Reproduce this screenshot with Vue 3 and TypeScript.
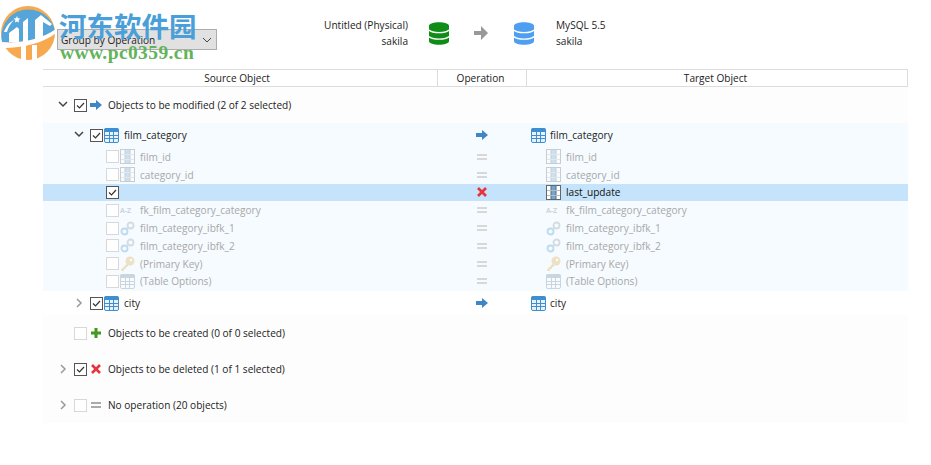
<template>
  <div class="page">
    <svg class="defs" width="0" height="0">
      <symbol id="table" viewBox="0 0 15 15">
        <rect x="0.5" y="0.5" width="14" height="14" rx="1.5" fill="#e8f2fb" stroke="#3f8fd0" />
        <rect x="0.5" y="0.5" width="14" height="3.5" fill="#3f8fd0" />
        <path d="M5.5 4v10M9.5 4v10M1 7.500h13M1 10.500h13" stroke="#3f8fd0" />
      </symbol>
      <symbol id="column" viewBox="0 0 15 15">
        <rect x="0.5" y="0.5" width="14" height="14" fill="#fff" stroke="#666" />
        <rect x="5" y="1" width="5" height="13" fill="#6aa8dc" />
        <path d="M5 1v13M10 1v13" stroke="#666" />
        <path d="M1 5.500h13M1 10.500h13" stroke="#bbb" />
      </symbol>
      <symbol id="link" viewBox="0 0 15 15">
        <circle cx="10.500" cy="4.500" r="3" fill="none" stroke="#8a97a3" stroke-width="1.800" />
        <circle cx="4.500" cy="10.500" r="3" fill="none" stroke="#3f8fd0" stroke-width="1.800" />
        <path d="M6 9l3-3" stroke="#8a97a3" stroke-width="1.600" />
      </symbol>
      <symbol id="key" viewBox="0 0 15 15">
        <circle cx="10" cy="5" r="4.500" fill="#dca53c" />
        <circle cx="11" cy="4" r="1.300" fill="#fff" />
        <path d="M7 7.500L1 13.500V15h3v-2h2v-2h1.500l1-2z" fill="#dca53c" />
      </symbol>
      <symbol id="options" viewBox="0 0 15 15">
        <rect x="0.5" y="0.5" width="14" height="14" rx="1.500" fill="#fff" stroke="#6b8299" />
        <rect x="0.5" y="0.5" width="14" height="3.500" fill="#6b8299" />
        <path d="M5.500 4v10M9.500 4v10M1 7.500h13M1 10.500h13" stroke="#6b8299" />
      </symbol>
      <symbol id="right" viewBox="0 0 12 10">
        <path d="M0 3h6V0l6 5-6 5V7H0z" fill="#3f86c6" />
      </symbol>
      <symbol id="equal" viewBox="0 0 10 6">
        <path d="M0 1h10M0 5h10" stroke="currentColor" stroke-width="2" />
      </symbol>
      <symbol id="cross" viewBox="0 0 10 10">
        <path d="M1 1l8 8M9 1l-8 8" stroke="#e5343c" stroke-width="2.600" />
      </symbol>
      <symbol id="plus" viewBox="0 0 10 10">
        <path d="M5 0v10M0 5h10" stroke="#3f9a1e" stroke-width="3" />
      </symbol>
      <symbol id="db" viewBox="0 0 20 23">
        <path d="M0 4c0-5 20-5 20 0v15c0 5-20 5-20 0z" fill="currentColor" />
        <path d="M0 8c3 3.500 17 3.500 20 0M0 14.500c3 3.500 17 3.500 20 0" fill="none" stroke="#fff" stroke-width="1.400" />
      </symbol>
    </svg>

    <header class="top">
      <div class="combo">
        <span>Group by Operation</span>
        <svg class="combo-arrow" viewBox="0 0 10 6"><path d="M1 1l4 4 4-4" fill="none" stroke="#444" /></svg>
      </div>
      <div class="endpoints">
        <div class="endpoint endpoint-left">
          <span>Untitled (Physical)</span>
          <span>sakila</span>
        </div>
        <svg class="db db-green"><use href="#db" /></svg>
        <svg class="flow-arrow" viewBox="0 0 14 14"><path d="M0 5h7V0l7 7-7 7V9H0z" fill="#999" /></svg>
        <svg class="db db-blue"><use href="#db" /></svg>
        <div class="endpoint endpoint-right">
          <span>MySQL 5.5</span>
          <span>sakila</span>
        </div>
      </div>
    </header>

    <div class="head">
      <div class="head-source">Source Object</div>
      <div>Operation</div>
      <div>Target Object</div>
    </div>

    <div class="body">
      <div class="section">
        <div class="src">
          <svg class="chevron"><path d="M1 2l4 4 4-4" /></svg>
          <span class="box checked"><svg viewBox="0 0 11 11"><path d="M2 5.500l2.500 2.500 4.500-5" /></svg></span>
          <svg class="op-icon"><use href="#right" /></svg>
          <span>Objects to be modified (2 of 2 selected)</span>
        </div>
      </div>

      <div class="group">
        <div class="table-row">
          <div class="src">
            <svg class="chevron"><path d="M1 2l4 4 4-4" /></svg>
            <span class="box checked"><svg viewBox="0 0 11 11"><path d="M2 5.500l2.500 2.500 4.500-5" /></svg></span>
            <svg class="obj-icon"><use href="#table" /></svg>
            <span>film_category</span>
          </div>
          <div class="op"><svg class="op-icon"><use href="#right" /></svg></div>
          <div class="dst">
            <svg class="obj-icon"><use href="#table" /></svg>
            <span>film_category</span>
          </div>
        </div>

        <div class="children">
          <div
            v-for="row in children"
            :key="row.target"
            class="child"
            :class="{ selected: row.selected }"
          >
            <div class="src">
              <span class="box" :class="{ checked: row.selected }">
                <svg v-if="row.selected" viewBox="0 0 11 11"><path d="M2 5.500l2.500 2.500 4.500-5" /></svg>
              </span>
              <template v-if="!row.selected">
                <span v-if="row.icon === 'az'" class="az">A-Z</span>
                <svg v-else class="obj-icon"><use :href="`#${row.icon}`" /></svg>
                <span>{{ row.target }}</span>
              </template>
            </div>
            <div class="op">
              <svg v-if="row.selected" class="cross"><use href="#cross" /></svg>
              <svg v-else class="equal"><use href="#equal" /></svg>
            </div>
            <div class="dst">
              <span v-if="row.icon === 'az'" class="az">A-Z</span>
              <svg v-else class="obj-icon"><use :href="`#${row.icon}`" /></svg>
              <span>{{ row.target }}</span>
            </div>
          </div>
        </div>
      </div>

      <div class="table-row city">
        <div class="src">
          <svg class="chevron closed"><path d="M3 1l4 4-4 4" /></svg>
          <span class="box checked"><svg viewBox="0 0 11 11"><path d="M2 5.500l2.500 2.500 4.500-5" /></svg></span>
          <svg class="obj-icon"><use href="#table" /></svg>
          <span>city</span>
        </div>
        <div class="op"><svg class="op-icon"><use href="#right" /></svg></div>
        <div class="dst">
          <svg class="obj-icon"><use href="#table" /></svg>
          <span>city</span>
        </div>
      </div>

      <div class="section">
        <div class="src">
          <span class="chevron-gap"></span>
          <span class="box"></span>
          <svg class="op-small"><use href="#plus" /></svg>
          <span>Objects to be created (0 of 0 selected)</span>
        </div>
      </div>
      <div class="section">
        <div class="src">
          <svg class="chevron closed"><path d="M3 1l4 4-4 4" /></svg>
          <span class="box checked"><svg viewBox="0 0 11 11"><path d="M2 5.500l2.500 2.500 4.500-5" /></svg></span>
          <svg class="op-small"><use href="#cross" /></svg>
          <span>Objects to be deleted (1 of 1 selected)</span>
        </div>
      </div>
      <div class="section">
        <div class="src">
          <svg class="chevron closed"><path d="M3 1l4 4-4 4" /></svg>
          <span class="box"></span>
          <svg class="op-small noop"><use href="#equal" /></svg>
          <span>No operation (20 objects)</span>
        </div>
      </div>
    </div>

    <!-- site watermark sits over the toolbar -->
    <div class="watermark">
      <svg class="wm-logo" viewBox="0 0 57 57">
        <circle cx="28" cy="27" r="27" fill="#f7a94f" />
        <path d="M2 36A27 27 0 1 1 55 25C42 33 20 38 2 36z" fill="#55a5da" />
        <path d="M1 36C20 38 42 33 56 23V27C44 37 22 42 4 42z" fill="#fff" />
        <path d="M9 36V27L17 21 19 23V37zM23 38V16L28 12V37zM35 35V14L41 9 52 18 50 20 43 16V33z" fill="#fff" />
        <path d="M21 40h5V54H21zM32 39h5V55H32z" fill="#fff" />
        <path d="M4 26C6 20 10 16 14 14 10 18 8 22 7 26z" fill="#fff" />
        <path d="M17 10l1 2.200 2.400.3-1.800 1.700.5 2.400-2.100-1.200-2.100 1.200.5-2.400-1.800-1.700 2.400-.3z" fill="#fff" />
      </svg>
      <div class="wm-name">河东软件园</div>
      <div class="wm-url">www.pc0359.cn</div>
    </div>
  </div>
</template>

<script setup lang="ts">
interface ChildRow {
  target: string
  icon: string
  selected?: boolean
}

const children: ChildRow[] = [
  { target: 'film_id', icon: 'column' },
  { target: 'category_id', icon: 'column' },
  { target: 'last_update', icon: 'column', selected: true },
  { target: 'fk_film_category_category', icon: 'az' },
  { target: 'film_category_ibfk_1', icon: 'link' },
  { target: 'film_category_ibfk_2', icon: 'link' },
  { target: '(Primary Key)', icon: 'key' },
  { target: '(Table Options)', icon: 'options' },
]
</script>

<style>
html,
body {
  background: #fff;
}
</style>

<style scoped>
.page {
  position: relative;
  width: 931px;
  height: 465px;
  overflow: hidden;
  background: #fff;
  color: #222;
  font-family: "Open Sans", "Noto Sans", sans-serif;
  font-size: 10.1px;
}

.defs {
  position: absolute;
}

.top {
  height: 69px;
  display: flex;
  padding-left: 57px;
}

.combo {
  width: 160px;
  height: 21px;
  margin-top: 29px;
  padding: 0 4px 0 3px;
  box-sizing: border-box;
  display: flex;
  align-items: center;
  justify-content: space-between;
  background: #e1e1e1;
  border: 1px solid #adadad;
}

.combo-arrow {
  width: 10px;
  height: 6px;
}

.endpoints {
  position: absolute;
  left: 0;
  top: 18px;
  display: flex;
  align-items: center;
}

.endpoint {
  display: flex;
  flex-direction: column;
  gap: 2px;
  line-height: 14px;
}

.endpoint-left {
  width: 408px;
  text-align: right;
}

.endpoint-right {
  margin-left: 22px;
}

.db {
  width: 20px;
  height: 23px;
}

.db-green {
  margin-left: 21px;
  color: #108c18;
}

.db-blue {
  margin-left: 26px;
  color: #4f9ff0;
}

.flow-arrow {
  width: 14px;
  height: 14px;
  margin-left: 25px;
}

.head {
  margin: 0 23px 0 43px;
  height: 18px;
  box-sizing: border-box;
  display: grid;
  grid-template-columns: 394px 89px 1fr;
  border-top: 1px solid #dcdcdc;
  border-bottom: 1px solid #dcdcdc;
  border-right: 1px solid #dcdcdc;
  line-height: 17px;
  text-align: center;
}

.head > div + div {
  border-left: 1px solid #dcdcdc;
  padding-right: 3px;
}

.head-source {
  padding-right: 6px;
}

.body {
  margin: 0 23px 0 43px;
  height: 336px;
  background: #fdfdfd;
}

.section {
  height: 36px;
  display: flex;
  align-items: center;
}

.src,
.dst {
  display: flex;
  align-items: center;
  white-space: nowrap;
}

.section .src {
  padding-left: 15px;
}

.group {
  background: #f5fbff;
  height: 168px;
}

.children {
  padding-top: 1px;
}

.city {
  background: #fff;
}

.table-row,
.child {
  display: grid;
  grid-template-columns: 394px 89px 1fr;
  align-items: center;
}

.table-row {
  height: 24px;
}

.table-row .src {
  padding-left: 31px;
}

.table-row .dst .obj-icon {
  margin-right: 4px;
}

.child {
  height: 17.8px;
  color: #a8a8a8;
}

.child .src {
  padding-left: 63px;
}

.child .dst {
  padding-left: 19px;
}

.child.selected {
  background: #c5e3fb;
  color: #111;
}

.dst {
  padding-left: 4px;
}

.op {
  display: flex;
  justify-content: center;
  padding-left: 1px;
}

.chevron,
.chevron-gap {
  width: 10px;
  height: 10px;
  margin-right: 6px;
  flex: none;
}

.chevron path {
  fill: none;
  stroke: #444;
  stroke-width: 1.5;
}

.chevron.closed path {
  stroke: #999;
}

.box {
  width: 13px;
  height: 13px;
  box-sizing: border-box;
  border: 1px solid #d8d8d8;
  background: #fff;
  flex: none;
  display: block;
}

.box.checked {
  border-color: #555;
}

.box svg {
  display: block;
  width: 11px;
  height: 11px;
}

.box path {
  fill: none;
  stroke: #333;
  stroke-width: 1.2;
}

.obj-icon {
  width: 15px;
  height: 15px;
  margin: 0 5px 0 1px;
  flex: none;
}

.child .obj-icon,
.child .az {
  opacity: 0.3;
}

.child.selected .obj-icon {
  opacity: 1;
}

.az {
  width: 15px;
  margin: 0 5px 0 1px;
  font-size: 7px;
  font-weight: 700;
  color: #6f7f8f;
  white-space: nowrap;
}

.op-icon {
  width: 12px;
  height: 10px;
  flex: none;
}

.section .op-icon {
  margin: 0 6px 0 3px;
}

.op-small {
  width: 10px;
  height: 10px;
  margin: 0 7px 0 4px;
  flex: none;
}

.noop {
  height: 6px;
  color: #aaa;
}

.equal {
  width: 10px;
  height: 6px;
  color: #d8d8d8;
}

.cross {
  width: 10px;
  height: 10px;
}

.watermark {
  position: absolute;
  left: 0;
  top: 0;
  width: 200px;
  height: 66px;
}

.wm-logo {
  position: absolute;
  left: 0;
  top: 6px;
  width: 57px;
  height: 57px;
}

.wm-name {
  position: absolute;
  left: 59px;
  top: 8px;
  font-family: "Noto Sans CJK SC", sans-serif;
  font-size: 27.5px;
  line-height: 34px;
  font-weight: 700;
  color: #4a9fd8;
  white-space: nowrap;
}

.wm-url {
  position: absolute;
  left: 60px;
  top: 43px;
  font-family: "Liberation Serif", serif;
  font-size: 19.5px;
  line-height: 20px;
  letter-spacing: 0.4px;
  font-weight: 700;
  color: #62b35a;
  white-space: nowrap;
}
</style>
